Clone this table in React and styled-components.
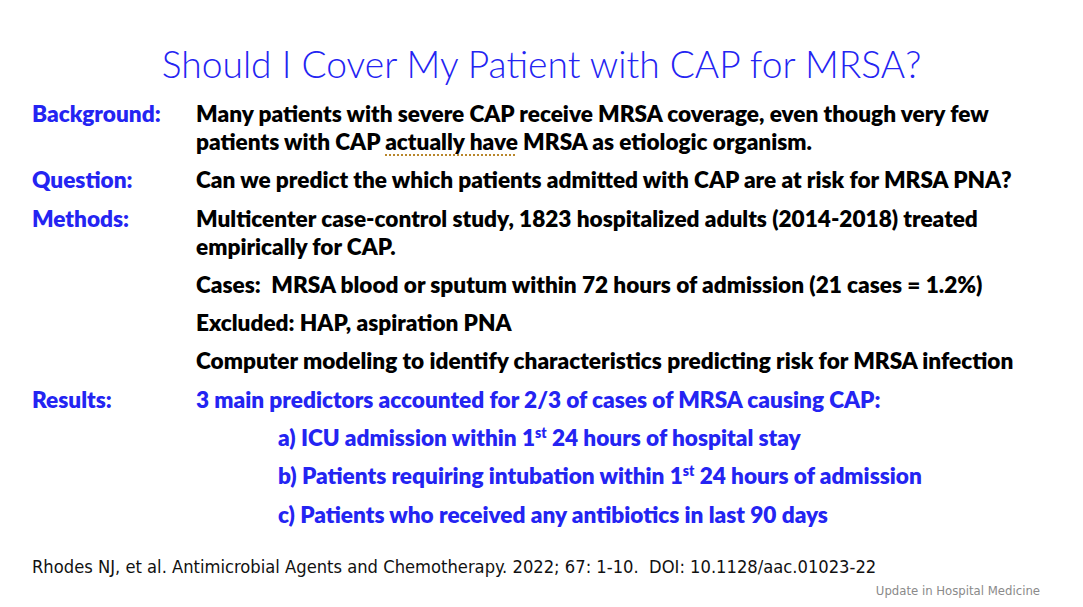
import React from 'react';
import styled, { createGlobalStyle } from 'styled-components';

const GlobalStyle = createGlobalStyle`
    html, body {
        margin: 0;
        padding: 0;
        background: #ffffff;
    }
    body {
        font-family: Lato, "Open Sans", sans-serif;
    }
`;

const BLUE = '#2424f2';

const Slide = styled.div`
    width: 1083px;
    height: 607px;
    position: relative;
    overflow: hidden;
    background: #ffffff;
    box-sizing: border-box;
    padding: 42px 0 0 32px;
`;

const Title = styled.h1`
    margin: 0 0 0 -32px;
    font-size: 37.2px;
    font-weight: 300;
    color: ${BLUE};
    text-align: center;
    line-height: 44px;
`;

const Body = styled.div`
    margin-top: 14px;
    display: flex;
    flex-direction: column;
    gap: 10.3px;
`;

const Section = styled.div`
    display: grid;
    grid-template-columns: 164px 860px;
    align-items: start;
`;

const Label = styled.div`
    font-size: 22.6px;
    font-weight: 800;
    color: ${BLUE};
    line-height: 28px;
`;

const Content = styled.div`
    display: flex;
    flex-direction: column;
    gap: 10.3px;
`;

const Para = styled.p`
    margin: 0;
    padding-left: ${(p) => (p.$indent ? '82px' : '0')};
    font-size: 22.6px;
    font-weight: 800;
    line-height: 28px;
    color: ${(p) => (p.$blue ? BLUE : '#000000')};
    white-space: pre;
`;

const Squiggle = styled.span`
    text-decoration: underline dotted #b8862b;
    text-underline-offset: 4px;
    text-decoration-thickness: 1.5px;
`;

const Sup = styled.sup`
    font-size: 14px;
    line-height: 0;
    vertical-align: 8px;
`;

const Citation = styled.div`
    position: absolute;
    left: 32px;
    top: 556px;
    font-family: "DejaVu Sans Condensed", "Liberation Sans Narrow", Lato, sans-serif;
    font-size: 18.2px;
    color: #111111;
    white-space: pre;
`;

const Footer = styled.div`
    position: absolute;
    right: 43px;
    top: 583px;
    font-family: "DejaVu Sans Condensed", "Liberation Sans Narrow", Lato, sans-serif;
    font-size: 13px;
    color: #8a8a8a;
`;

export default function App() {
    return (
        <>
            <GlobalStyle />
            <Slide>
                <Title>Should I Cover My Patient with CAP for MRSA?</Title>
                <Body>
                    <Section>
                        <Label>Background:</Label>
                        <Content>
                            <Para>
                                Many patients with severe CAP receive MRSA coverage, even though very few
                                <br />
                                patients with CAP <Squiggle>actually have</Squiggle> MRSA as etiologic organism.
                            </Para>
                        </Content>
                    </Section>
                    <Section>
                        <Label>Question:</Label>
                        <Content>
                            <Para>Can we predict the which patients admitted with CAP are at risk for MRSA PNA?</Para>
                        </Content>
                    </Section>
                    <Section>
                        <Label>Methods:</Label>
                        <Content>
                            <Para>
                                Multicenter case-control study, 1823 hospitalized adults (2014-2018) treated
                                <br />
                                empirically for CAP.
                            </Para>
                            <Para>{'Cases:  MRSA blood or sputum within 72 hours of admission (21 cases = 1.2%)'}</Para>
                            <Para>Excluded: HAP, aspiration PNA</Para>
                            <Para>Computer modeling to identify characteristics predicting risk for MRSA infection</Para>
                        </Content>
                    </Section>
                    <Section>
                        <Label>Results:</Label>
                        <Content>
                            <Para $blue>3 main predictors accounted for 2/3 of cases of MRSA causing CAP:</Para>
                            <Para $blue $indent>
                                a) ICU admission within 1<Sup>st</Sup> 24 hours of hospital stay
                            </Para>
                            <Para $blue $indent>
                                b) Patients requiring intubation within 1<Sup>st</Sup> 24 hours of admission
                            </Para>
                            <Para $blue $indent>c) Patients who received any antibiotics in last 90 days</Para>
                        </Content>
                    </Section>
                </Body>
                <Citation>
                    {'Rhodes NJ, et al. Antimicrobial Agents and Chemotherapy. 2022; 67: 1-10.  DOI: 10.1128/aac.01023-22'}
                </Citation>
                <Footer>Update in Hospital Medicine</Footer>
            </Slide>
        </>
    );
}
